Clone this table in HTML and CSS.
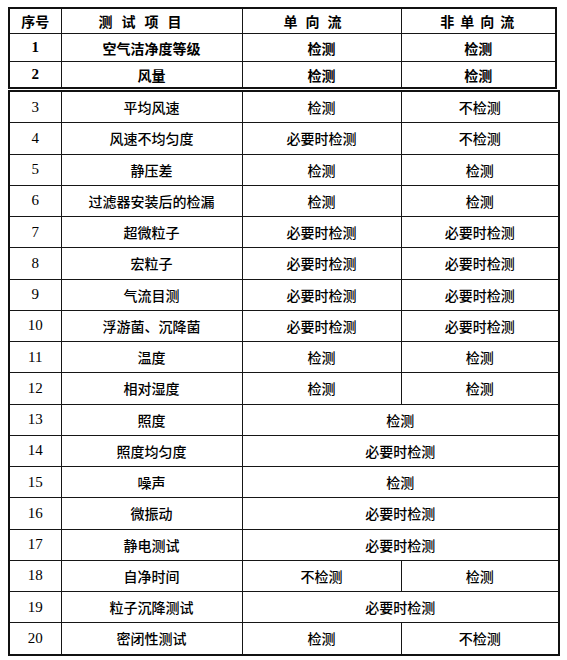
FILE: index.html
```html
<!DOCTYPE html>
<html lang="zh">
<head>
<meta charset="utf-8">
<title>检测项目</title>
<link rel="stylesheet" href="styles.css">
</head>
<body>
<div class="caption"><span class="cap-no">表</span><span class="cap-title">综合性能全面评定检测项目</span></div>

<table class="tbl tbl-top">
  <colgroup><col class="c1"><col class="c2"><col class="c3"><col class="c4a"></colgroup>
  <tr class="head">
    <td class="h-no">序号</td>
    <td class="h-item">测试项目</td>
    <td class="h-uni">单向流</td>
    <td class="h-non">非单向流</td>
  </tr>
  <tr class="r1 bold"><td class="num">1</td><td>空气洁净度等级</td><td>检测</td><td>检测</td></tr>
  <tr class="r2 bold"><td class="num">2</td><td>风量</td><td>检测</td><td>检测</td></tr>
</table>

<table class="tbl tbl-main">
  <colgroup><col class="c1"><col class="c2"><col class="c3"><col class="c4b"></colgroup>
  <tr><td class="num">3</td><td>平均风速</td><td>检测</td><td>不检测</td></tr>
  <tr><td class="num">4</td><td>风速不均匀度</td><td>必要时检测</td><td>不检测</td></tr>
  <tr><td class="num">5</td><td>静压差</td><td>检测</td><td>检测</td></tr>
  <tr><td class="num">6</td><td>过滤器安装后的检漏</td><td>检测</td><td>检测</td></tr>
  <tr><td class="num">7</td><td>超微粒子</td><td>必要时检测</td><td>必要时检测</td></tr>
  <tr><td class="num">8</td><td>宏粒子</td><td>必要时检测</td><td>必要时检测</td></tr>
  <tr><td class="num">9</td><td>气流目测</td><td>必要时检测</td><td>必要时检测</td></tr>
  <tr><td class="num">10</td><td>浮游菌、沉降菌</td><td>必要时检测</td><td>必要时检测</td></tr>
  <tr><td class="num">11</td><td>温度</td><td>检测</td><td>检测</td></tr>
  <tr><td class="num">12</td><td>相对湿度</td><td>检测</td><td>检测</td></tr>
  <tr><td class="num">13</td><td>照度</td><td colspan="2">检测</td></tr>
  <tr><td class="num">14</td><td>照度均匀度</td><td colspan="2">必要时检测</td></tr>
  <tr><td class="num">15</td><td>噪声</td><td colspan="2">检测</td></tr>
  <tr><td class="num">16</td><td>微振动</td><td colspan="2">必要时检测</td></tr>
  <tr><td class="num">17</td><td>静电测试</td><td colspan="2">必要时检测</td></tr>
  <tr><td class="num">18</td><td>自净时间</td><td>不检测</td><td>检测</td></tr>
  <tr><td class="num">19</td><td>粒子沉降测试</td><td colspan="2">必要时检测</td></tr>
  <tr><td class="num">20</td><td>密闭性测试</td><td>检测</td><td>不检测</td></tr>
</table>
</body>
</html>
```

FILE: styles.css
```css
html, body {
  margin: 0;
  padding: 0;
  background: #ffffff;
}

body {
  font-family: "Noto Sans CJK SC", "Liberation Serif", serif;
  color: #000;
  width: 567px;
}

.caption {
  height: 6px;
  overflow: hidden;
  display: flex;
  align-items: flex-end;
  font-size: 14px;
  font-weight: 700;
  line-height: 14px;
  color: #222;
}

.caption span {
  display: block;
  transform: translateY(-8px);
}

.cap-no {
  margin-left: 168px;
}

.cap-title {
  margin-left: 64px;
  letter-spacing: -1px;
}

.tbl {
  border-collapse: collapse;
  table-layout: fixed;
  margin-left: 8px;
  font-size: 14px;
}

.tbl td {
  border: 1.5px solid #161616;
  text-align: center;
  vertical-align: middle;
  padding: 0;
  line-height: 1;
  white-space: nowrap;
}

.tbl-top {
  width: 547px;
  border: 2px solid #111;
  margin-top: 1px;
}

.tbl-main {
  width: 550px;
  border: 2px solid #111;
  margin-top: 1px;
}

.c1 { width: 52px; }
.c2 { width: 181px; }
.c3 { width: 159px; }
.c4a { width: 155px; }
.c4b { width: 158px; }

.head td {
  height: 24px;
  font-weight: 700;
}

.h-no { letter-spacing: 0; }
.h-item { letter-spacing: 9px; padding-right: 14px !important; }
.h-uni { letter-spacing: 8px; padding-right: 10px !important; }
.h-non { letter-spacing: 6px; padding-left: 4px !important; }

.r1 td { height: 27px; }
.r2 td { height: 25px; }

.bold td { font-weight: 700; }

.tbl-main td {
  height: 30.25px;
  font-weight: 500;
}

.num {
  font-family: "Liberation Serif", serif;
  font-size: 15px;
  font-weight: 400 !important;
}

.bold .num {
  font-weight: 700 !important;
}
```
